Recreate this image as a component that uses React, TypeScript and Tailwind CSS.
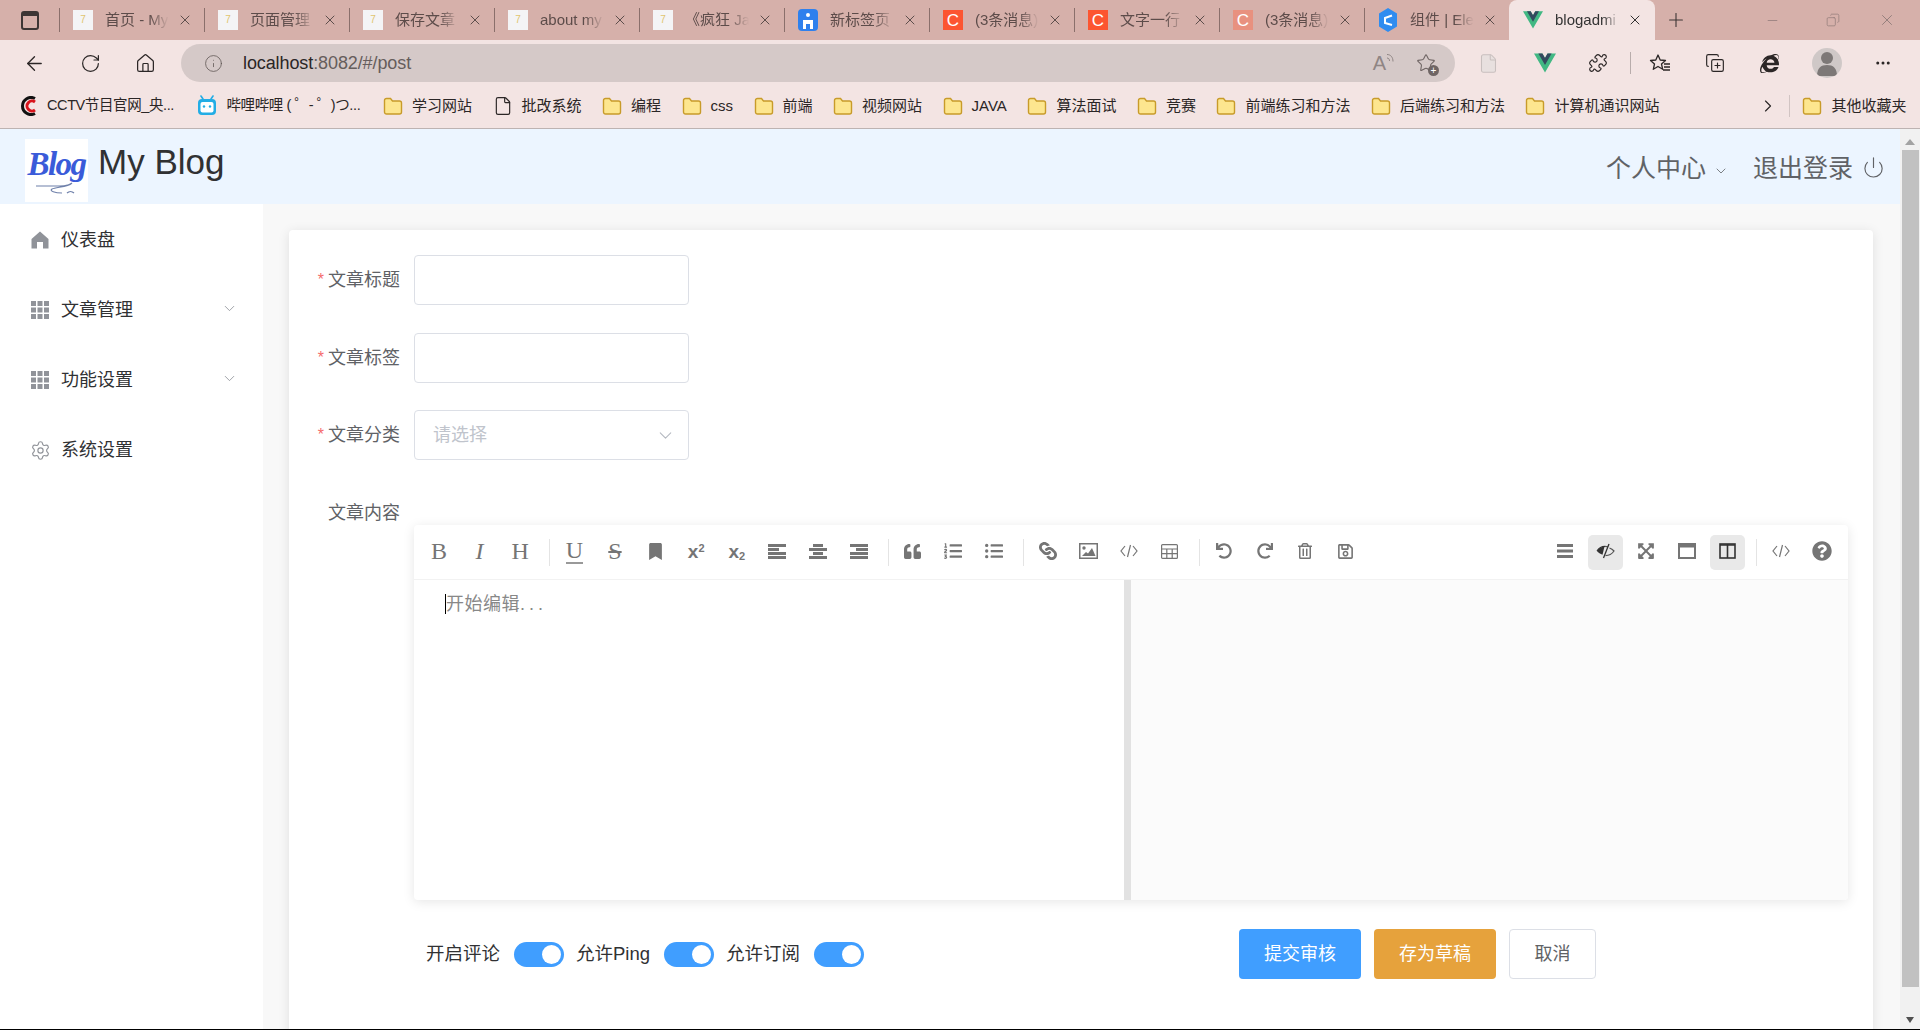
import React from 'react';
import {
  ArrowLeft, RotateCw, Home, Info, X, Plus, Minus, Copy, ChevronDown, ChevronRight, Puzzle, Star,
  CopyPlus, MoreHorizontal, File, Settings, Power,
} from 'lucide-react';
import {
  FaBookmark, FaQuoteLeft, FaListOl, FaListUl, FaLink, FaUndo, FaRedo,
  FaRegTrashAlt, FaRegSave, FaExpandArrowsAlt, FaQuestionCircle, FaInternetExplorer,
} from 'react-icons/fa';

const VueLogo = ({ size = 20 }: { size?: number }) => (
  <svg width={size} height={size} viewBox="0 0 256 221">
    <path fill="#41b883" d="M204.8 0H256L128 220.8 0 0h97.92L128 51.2 157.44 0z" />
    <path fill="#34495e" d="M50.56 0 128 133.12 204.8 0h-47.36L128 51.2 97.92 0z" />
  </svg>
);

const DocFavicon = () => (
  <div className="flex h-5 w-5 items-center justify-center bg-[#f4f4f6]">
    <span className="text-[10px] leading-none text-[#e0c56e]">7</span>
  </div>
);

const CsdnFavicon = ({ faded }: { faded?: boolean }) => (
  <div className={`flex h-5 w-5 items-center justify-center text-[17px] leading-none text-white ${faded ? 'bg-[#e8917f]' : 'bg-[#fc5531]'}`}>
    C
  </div>
);

const BlueFavicon = () => (
  <svg width="20" height="22" viewBox="0 0 20 22">
    <rect width="20" height="22" rx="4" fill="#2f80ed" />
    <circle cx="10" cy="6" r="2" fill="#fff" />
    <path d="M5 20V11h10v9h-3v-5H8v5z" fill="#fff" />
  </svg>
);

const ElementFavicon = () => (
  <svg width="20" height="24" viewBox="0 0 20 24">
    <path d="M10 0l9 5.5v13L10 24l-9-5.5v-13z" fill="#2f8cf0" />
    <path d="M14 7.5 7 10v5l7 2" fill="none" stroke="#fff" strokeWidth="2" />
  </svg>
);

const tabs = [
  { title: '首页 - My', icon: <DocFavicon /> },
  { title: '页面管理 -', icon: <DocFavicon /> },
  { title: '保存文章 -', icon: <DocFavicon /> },
  { title: 'about my', icon: <DocFavicon /> },
  { title: '《疯狂 Ja', icon: <DocFavicon /> },
  { title: '新标签页', icon: <BlueFavicon /> },
  { title: '(3条消息)', icon: <CsdnFavicon /> },
  { title: '文字一行', icon: <CsdnFavicon /> },
  { title: '(3条消息)', icon: <CsdnFavicon faded /> },
  { title: '组件 | Ele', icon: <ElementFavicon /> },
];

const Folder = () => (
  <svg width="20" height="20" viewBox="0 0 20 20" className="shrink-0">
    <path d="M1.5 4.5a2 2 0 0 1 2-2h4l2 2.5h7a2 2 0 0 1 2 2v9a2 2 0 0 1-2 2h-13a2 2 0 0 1-2-2z" fill="#fde68f" stroke="#c89b2a" strokeWidth="1.4" />
  </svg>
);

const CctvLogo = () => (
  <svg width="18" height="20" viewBox="0 0 18 20" className="shrink-0">
    <path d="M15 2.5A8.5 8.5 0 1 0 15 17.5" fill="none" stroke="#111" strokeWidth="3" />
    <path d="M15 6A5 5 0 1 0 15 14" fill="none" stroke="#d8141c" strokeWidth="3" />
  </svg>
);

const BiliLogo = () => (
  <svg width="20" height="22" viewBox="0 0 20 22" className="shrink-0">
    <path d="M6 4 4 1M14 4l2-3" stroke="#23ade5" strokeWidth="1.6" strokeLinecap="round" />
    <rect x="1" y="4" width="18" height="16" rx="4" fill="#23ade5" />
    <rect x="3.5" y="7" width="13" height="10.5" rx="2" fill="#fff" />
    <circle cx="7" cy="11.5" r="1.2" fill="#23ade5" />
    <circle cx="13" cy="11.5" r="1.2" fill="#23ade5" />
  </svg>
);

const bookmarks = ['学习网站', '批改系统', '编程', 'css', '前端', '视频网站', 'JAVA', '算法面试', '竞赛', '前端练习和方法', '后端练习和方法', '计算机通识网站'];

const HouseIcon = () => (
  <svg width="18" height="18" viewBox="0 0 18 18" fill="#909399">
    <path d="M9 0.5 17.5 8v9.5h-5.5V11H6v6.5H0.5V8z" />
  </svg>
);

const GridIcon = () => (
  <svg width="18" height="18" viewBox="0 0 18 18" fill="#909399">
    {[0, 6.5, 13].map((y) => [0, 6.5, 13].map((x) => <rect key={`${x}-${y}`} x={x} y={y} width="5" height="5" />))}
  </svg>
);

const AlignIcon = ({ lines }: { lines: number[][] }) => (
  <svg width="18" height="15" viewBox="0 0 18 15" fill="#757575">
    {lines.map(([x, w], i) => <rect key={i} x={x} y={i * 4} width={w} height="3" />)}
  </svg>
);

const CodeIcon = () => (
  <svg width="18" height="14" viewBox="0 0 18 14" fill="none" stroke="#757575" strokeWidth="1.2">
    <path d="M5 2 1 7l4 5M13 2l4 5-4 5M10.5 1 7.5 13" />
  </svg>
);

const TableIcon = () => (
  <svg width="17" height="15" viewBox="0 0 17 15" fill="none" stroke="#757575" strokeWidth="1.2">
    <rect x="0.6" y="0.6" width="15.8" height="13.8" rx="1" />
    <path d="M0.6 5h15.8M0.6 9.6h15.8M5.8 5v9.4M11.2 5v9.4" />
  </svg>
);

const ImageIcon = () => (
  <svg width="19" height="16" viewBox="0 0 19 16">
    <rect x="0.75" y="0.75" width="17.5" height="14.5" fill="none" stroke="#757575" strokeWidth="1.5" />
    <circle cx="5" cy="5" r="1.7" fill="#757575" />
    <path d="M3 13l4-4 2 1.5L13 5l3.5 8z" fill="#757575" />
  </svg>
);

const BarsIcon = () => (
  <svg width="16" height="14" viewBox="0 0 16 14" fill="#757575">
    <rect y="0" width="16" height="3" />
    <rect y="5.5" width="16" height="3" />
    <rect y="11" width="16" height="3" />
  </svg>
);

const EyeOffIcon = () => (
  <svg width="19" height="16" viewBox="0 0 19 16">
    <path d="M1 8c1.800-2.600 4.500-4.300 7.500-4.600L6.500 11.800C4.300 11 2.400 9.800 1 8z" fill="#333" />
    <path d="M9 3.400c1 0 2 .2 3 .5M13.500 5c1.800.7 3.300 1.700 4.500 3-1.900 2.800-5 4.600-8.500 4.600" fill="none" stroke="#555" strokeWidth="1.200" />
    <path d="M1 8c1.800-2.800 5-4.600 8-4.600" fill="none" stroke="#333" strokeWidth="1.200" />
    <path d="M13 1 7.500 15" stroke="#333" strokeWidth="1.300" />
  </svg>
);

const WindowIcon = () => (
  <svg width="18" height="16" viewBox="0 0 18 16" fill="none" stroke="#757575">
    <rect x="1" y="1" width="16" height="14" strokeWidth="2" />
    <rect x="1" y="1" width="16" height="3" fill="#757575" strokeWidth="1" />
  </svg>
);

const SplitIcon = () => (
  <svg width="17" height="16" viewBox="0 0 17 16" fill="none" stroke="#333">
    <rect x="1" y="1" width="15" height="14" strokeWidth="1.6" />
    <path d="M1 2h15M8.500 1v14" strokeWidth="1.6" />
  </svg>
);

const FavoritesIcon = () => (
  <svg width="22" height="20" viewBox="0 0 22 20" fill="none" stroke="#2b2626" strokeWidth="1.300" strokeLinejoin="round">
    <path d="M9 2l2.200 5 5.300.5-4 3.500 1.200 5.300L9 13.500 4.300 16.300 5.500 11l-4-3.500L6.800 7z" />
    <path d="M15 11h6M15 14h6M14 17h7" />
  </svg>
);

const ToolBtn = ({ active, children }: { active?: boolean; children: React.ReactNode }) => (
  <div className={`flex h-[35px] w-[35px] shrink-0 items-center justify-center rounded-[5px] pb-[2px] text-[#757575] ${active ? 'bg-[#e9e9e9]' : ''}`}>
    {children}
  </div>
);

const Sep = () => <div className="mr-px ml-[6px] h-[27px] w-px shrink-0 bg-[#e4e4e4]" />;

const SerifGlyph = ({ children, className = '' }: { children: React.ReactNode; className?: string }) => (
  <span className={`font-['Liberation_Serif',serif] text-[24px] leading-none ${className}`}>{children}</span>
);

const FormLabel = ({ required, children }: { required?: boolean; children: React.ReactNode }) => (
  <div className="flex h-[50px] w-[111px] shrink-0 items-center justify-end text-[18px] text-[#606266]">
    {required && <span className="mr-1 text-[16px] text-[#f56c6c]">*</span>}
    {children}
  </div>
);

const Switch = () => (
  <div className="flex h-[25px] w-[50px] shrink-0 items-center justify-end rounded-full bg-[#409eff] pr-[3px]">
    <div className="h-[19px] w-[19px] rounded-full bg-white" />
  </div>
);

export default function App() {
  return (
    <div className="flex h-[1030px] w-[1920px] flex-col overflow-hidden border-b border-black bg-white font-['Liberation_Sans','Noto_Sans_CJK_SC',sans-serif]">
      {/* Tab strip */}
      <div className="flex h-10 shrink-0 items-center bg-[#d6b0aa] text-[15px] text-[#5d4c4a]">
        <div className="flex w-[59px] shrink-0 justify-center pl-px">
          <div className="h-[19px] w-[18px] rounded-[3px] border-2 border-[#3d3534] border-t-[5px]" />
        </div>
        {tabs.map((tab, i) => (
          <div key={i} className="flex h-10 w-[145px] shrink-0 items-center">
            <div className="h-6 w-px shrink-0 bg-[#8a6f6b]" />
            <div className="ml-[13px] flex w-5 shrink-0 justify-center">{tab.icon}</div>
            <div className="ml-3 w-[64px] shrink-0 whitespace-nowrap [mask-image:linear-gradient(to_right,black_70%,transparent)]">{tab.title}</div>
            <X size={16} strokeWidth={1.2} className="ml-2 shrink-0 text-[#3d3534]" />
          </div>
        ))}
        <div className="flex h-10 w-[146px] shrink-0 items-center rounded-t-[8px] bg-[#f3e4e3] pl-[14px] text-[#333]">
          <VueLogo />
          <div className="ml-3 w-[64px] shrink-0 whitespace-nowrap [mask-image:linear-gradient(to_right,black_75%,transparent)]">blogadmi</div>
          <X size={16} strokeWidth={1.4} className="ml-2 shrink-0 text-[#222]" />
        </div>
        <Plus size={22} strokeWidth={1.2} className="ml-[10px] text-[#3d3534]" />
        <Minus size={15} strokeWidth={1.2} className="ml-[78px] text-[#8f7a78]" />
        <Copy size={14} strokeWidth={1.2} className="ml-[46px] -scale-x-100 text-[#8f7a78]" />
        <X size={18} strokeWidth={1.2} className="ml-[38px] text-[#8f7a78]" />
      </div>

      {/* Address bar */}
      <div className="flex h-[46px] shrink-0 items-center bg-[#f3e4e3] text-[#2b2626]">
        <ArrowLeft size={23} strokeWidth={1.4} className="ml-[23px]" />
        <RotateCw size={21} strokeWidth={1.4} className="ml-[34px]" />
        <Home size={21} strokeWidth={1.4} className="ml-[34px]" />
        <div className="ml-[25px] flex h-[38px] w-[1274px] shrink-0 items-center rounded-full bg-[#d5c9c8] pl-[23px]">
          <Info size={19} strokeWidth={1} className="text-[#5f5654]" />
          <span className="ml-[20px] text-[18px] tracking-[-0.1px] text-[#2b2626]">localhost<span className="text-[#665d5c]">:8082/#/post</span></span>
          <div className="ml-auto flex items-start text-[#8f8584]">
            <span className="text-[20px] leading-none">A</span>
            <svg width="8" height="12" viewBox="0 0 8 12" fill="none" stroke="#8f8584" strokeWidth="1">
              <path d="M1 5c1.500 0 2.500 1 2.500 3M1 1.500c3.500 0 6 2.500 6 7" />
            </svg>
          </div>
          <div className="relative mr-[19px] ml-[22px]">
            <Star size={20} strokeWidth={1.3} className="text-[#6f6564]" />
            <div className="absolute -right-[3px] -bottom-[3px] flex h-[11px] w-[11px] items-center justify-center rounded-full bg-[#6f6564] text-[10px] leading-none text-white">+</div>
          </div>
        </div>
        <File size={21} strokeWidth={1.2} className="ml-[23px] fill-[#e8e0df] text-[#c8bfbe]" />
        <div className="ml-[35px]"><VueLogo size={22} /></div>
        <Puzzle size={20} strokeWidth={1.4} className="ml-[32px]" />
        <div className="ml-[22px] h-[22px] w-px bg-[#b8acab]" />
        <div className="ml-[18px]"><FavoritesIcon /></div>
        <CopyPlus size={20} strokeWidth={1.4} className="ml-[34px]" />
        <FaInternetExplorer size={19} className="ml-[35px]" />
        <div className="ml-[33px] flex h-[30px] w-[30px] items-center justify-center overflow-hidden rounded-full bg-[#cfc8c7]">
          <svg width="20" height="26" viewBox="0 0 20 26" fill="#7d7877">
            <circle cx="10" cy="8" r="6" />
            <path d="M0 26c0-8 4-11 10-11s10 3 10 11z" />
          </svg>
        </div>
        <MoreHorizontal size={18} strokeWidth={2} className="ml-[32px]" />
      </div>

      {/* Bookmarks */}
      <div className="flex h-[43px] shrink-0 items-center gap-[20.5px] border-b border-[#bdb3b2] bg-[#f3e4e3] pb-[2px] pl-5 text-[15px] text-[#2b2626]">
        <div className="flex items-center gap-[9px]">
          <CctvLogo />
          <span className="w-[129px] text-[14.5px] tracking-[-0.4px] whitespace-nowrap">CCTV节目官网_央...</span>
        </div>
        <div className="flex items-center gap-[10px]">
          <BiliLogo />
          <span className="w-[136px] text-[14.5px] tracking-[-0.4px] whitespace-nowrap">哔哩哔哩 ( ゜- ゜)つ...</span>
        </div>
        {bookmarks.map((name) => (
          <div key={name} className="flex items-center gap-[9px]">
            {name === '批改系统' ? <File size={20} strokeWidth={1.4} className="shrink-0" /> : <Folder />}
            <span className="whitespace-nowrap">{name}</span>
          </div>
        ))}
        <ChevronRight size={20} strokeWidth={1.4} className="ml-[78px] shrink-0" />
        <div className="-ml-[9px] flex items-center gap-[9px] border-l border-[#d1c4c3] pl-3">
          <Folder />
          <span className="whitespace-nowrap">其他收藏夹</span>
        </div>
      </div>

      <div className="flex min-h-0 flex-1">
        <div className="flex min-w-0 flex-1 flex-col">
          {/* Header */}
          <header className="flex h-[75px] shrink-0 bg-[#ecf5ff] pl-[25px]">
            <div className="mt-[10px] flex h-[63px] w-[63px] shrink-0 flex-col items-center bg-white pt-[7px]">
              <span className="font-['Liberation_Serif',serif] text-[33px] leading-[36px] font-bold tracking-[-1.5px] text-[#3a5bd9] italic">Blog</span>
              <svg width="44" height="14" viewBox="0 0 44 14" fill="none" stroke="#6f80aa" strokeWidth="1.200">
                <path d="M1 4h24c6 0 10-1 12-3M37 1c-4 4-16 4-20 6-3 2 3 4 10 4" />
                <path d="M32 11c2-2 5-2 7 0" />
              </svg>
            </div>
            <div className="mt-[8px] ml-[10px] text-[35px] leading-[50px] text-[#303133]">My Blog</div>
            <div className="ml-auto flex h-[80px] items-center pr-[15px] text-[25px] text-[#606266]">
              <span>个人中心</span>
              <ChevronDown size={16} strokeWidth={1.2} className="mt-1 ml-[7px]" />
              <span className="ml-[24px]">退出登录</span>
              <Power size={23} strokeWidth={1.2} className="ml-[9px] -translate-y-0.5" />
            </div>
          </header>

          <div className="flex min-h-0 flex-1">
            {/* Sidebar */}
            <aside className="w-[263px] shrink-0 bg-white pt-px text-[18px] text-[#303133]">
              <div className="flex h-[70px] items-center pl-[31px]">
                <HouseIcon />
                <span className="ml-3">仪表盘</span>
              </div>
              <div className="flex h-[70px] items-center pr-[25px] pl-[31px]">
                <GridIcon />
                <span className="ml-3">文章管理</span>
                <ChevronDown size={17} strokeWidth={1.2} className="mb-1 ml-auto text-[#909399]" />
              </div>
              <div className="flex h-[70px] items-center pr-[25px] pl-[31px]">
                <GridIcon />
                <span className="ml-3">功能设置</span>
                <ChevronDown size={17} strokeWidth={1.2} className="mb-1 ml-auto text-[#909399]" />
              </div>
              <div className="flex h-[70px] items-center pl-[30px]">
                <Settings size={21} strokeWidth={1.3} className="text-[#909399]" />
                <span className="ml-[10px]">系统设置</span>
              </div>
            </aside>

            {/* Main */}
            <main className="min-w-0 flex-1 bg-[#f8f8f8] pt-[26px] pr-[27px] pl-[26px]">
              <div className="h-[900px] rounded-[4px] bg-white pt-[25px] shadow-[0_2px_12px_rgba(0,0,0,0.1)]">
                <div className="flex">
                  <FormLabel required>文章标题</FormLabel>
                  <div className="ml-[14px] h-[50px] w-[275px] rounded-[4px] border border-[#dcdfe6] bg-white" />
                </div>
                <div className="mt-[28px] flex">
                  <FormLabel required>文章标签</FormLabel>
                  <div className="ml-[14px] h-[50px] w-[275px] rounded-[4px] border border-[#dcdfe6] bg-white" />
                </div>
                <div className="mt-[27px] flex">
                  <FormLabel required>文章分类</FormLabel>
                  <div className="ml-[14px] flex h-[50px] w-[275px] items-center justify-between rounded-[4px] border border-[#dcdfe6] bg-white pr-[12px] pl-[18px] text-[18px] text-[#c0c4cc]">
                    请选择
                    <ChevronDown size={21} strokeWidth={1.2} className="text-[#b4b8c0]" />
                  </div>
                </div>
                <div className="mt-[27px] flex">
                  <div className="pt-px"><FormLabel>文章内容</FormLabel></div>
                  <div className="mt-[38px] ml-[14px] flex h-[375px] w-[1434px] flex-col rounded-[4px] bg-white shadow-[0_2px_12px_rgba(0,0,0,0.1)]">
                    {/* Editor toolbar */}
                    <div className="flex h-[55px] shrink-0 items-center gap-[5.6px] border-b border-[#f2f2f2] pr-[8.5px] pl-[7.5px]">
                      <ToolBtn><SerifGlyph>B</SerifGlyph></ToolBtn>
                      <ToolBtn><SerifGlyph className="italic">I</SerifGlyph></ToolBtn>
                      <ToolBtn><SerifGlyph>H</SerifGlyph></ToolBtn>
                      <Sep />
                      <ToolBtn><SerifGlyph className="border-b-2 border-[#999]">U</SerifGlyph></ToolBtn>
                      <ToolBtn><SerifGlyph className="line-through">S</SerifGlyph></ToolBtn>
                      <ToolBtn><FaBookmark size={17} /></ToolBtn>
                      <ToolBtn><span className="text-[19px] leading-none font-bold">x<sup className="text-[11px]">2</sup></span></ToolBtn>
                      <ToolBtn><span className="text-[19px] leading-none font-bold">x<sub className="text-[11px]">2</sub></span></ToolBtn>
                      <ToolBtn><AlignIcon lines={[[0, 18], [0, 11], [0, 18], [0, 18]]} /></ToolBtn>
                      <ToolBtn><AlignIcon lines={[[4, 10], [0, 18], [4, 10], [0, 18]]} /></ToolBtn>
                      <ToolBtn><AlignIcon lines={[[0, 18], [6, 12], [0, 18], [0, 18]]} /></ToolBtn>
                      <Sep />
                      <ToolBtn><FaQuoteLeft size={17} /></ToolBtn>
                      <ToolBtn><FaListOl size={18} /></ToolBtn>
                      <ToolBtn><FaListUl size={18} /></ToolBtn>
                      <Sep />
                      <ToolBtn><FaLink size={18} className="rotate-90" /></ToolBtn>
                      <ToolBtn><ImageIcon /></ToolBtn>
                      <ToolBtn><CodeIcon /></ToolBtn>
                      <ToolBtn><TableIcon /></ToolBtn>
                      <Sep />
                      <ToolBtn><FaUndo size={16} /></ToolBtn>
                      <ToolBtn><FaRedo size={16} /></ToolBtn>
                      <ToolBtn><FaRegTrashAlt size={16} /></ToolBtn>
                      <ToolBtn><FaRegSave size={17} /></ToolBtn>
                      <div className="ml-auto" />
                      <ToolBtn><BarsIcon /></ToolBtn>
                      <ToolBtn active><EyeOffIcon /></ToolBtn>
                      <ToolBtn><FaExpandArrowsAlt size={18} /></ToolBtn>
                      <ToolBtn><WindowIcon /></ToolBtn>
                      <ToolBtn active><SplitIcon /></ToolBtn>
                      <Sep />
                      <ToolBtn><CodeIcon /></ToolBtn>
                      <ToolBtn><FaQuestionCircle size={20} /></ToolBtn>
                    </div>
                    <div className="flex min-h-0 flex-1">
                      <div className="w-[710px] shrink-0 pt-[14px] pl-[31px] text-[18px] leading-[20px] text-[#888]">
                        <span className="border-l border-black tracking-[0.5px]">开始编辑<span className="tracking-[4px]">...</span></span>
                      </div>
                      <div className="w-[7px] shrink-0 bg-[#e2e2e2]" />
                      <div className="flex-1 rounded-br-[4px] bg-[#fbfbfb]" />
                    </div>
                  </div>
                </div>
                {/* Options and actions */}
                <div className="mt-[29px] flex h-[50px] items-center pl-[137px] text-[18px] text-[#303133]">
                  <span className="w-[74px] text-[18.5px] whitespace-nowrap">开启评论</span>
                  <div className="ml-[14px]"><Switch /></div>
                  <span className="ml-3 w-[75px] text-[18.5px] whitespace-nowrap">允许Ping</span>
                  <div className="ml-[13px]"><Switch /></div>
                  <span className="ml-3 w-[74px] text-[18.5px] whitespace-nowrap">允许订阅</span>
                  <div className="ml-[14px]"><Switch /></div>
                  <button className="ml-[375px] h-[50px] w-[122px] rounded-[4px] bg-[#409eff] text-white">提交审核</button>
                  <button className="ml-[13px] h-[50px] w-[122px] rounded-[4px] bg-[#e6a23c] text-white">存为草稿</button>
                  <button className="ml-[13px] h-[50px] w-[87px] rounded-[4px] border border-[#dcdfe6] bg-white text-[#606266]">取消</button>
                </div>
              </div>
            </main>
          </div>
        </div>

        {/* Page scrollbar */}
        <div className="flex w-5 shrink-0 flex-col items-center bg-[#f1f1f1]">
          <div className="mt-[10px] h-0 w-0 border-x-[5px] border-b-[6px] border-x-transparent border-b-[#a3a3a3]" />
          <div className="mt-[5px] h-[837px] w-[17px] bg-[#c1c1c1]" />
          <div className="mt-[30px] h-0 w-0 border-x-[4px] border-t-[6px] border-x-transparent border-t-[#505050]" />
        </div>
      </div>
    </div>
  );
}
